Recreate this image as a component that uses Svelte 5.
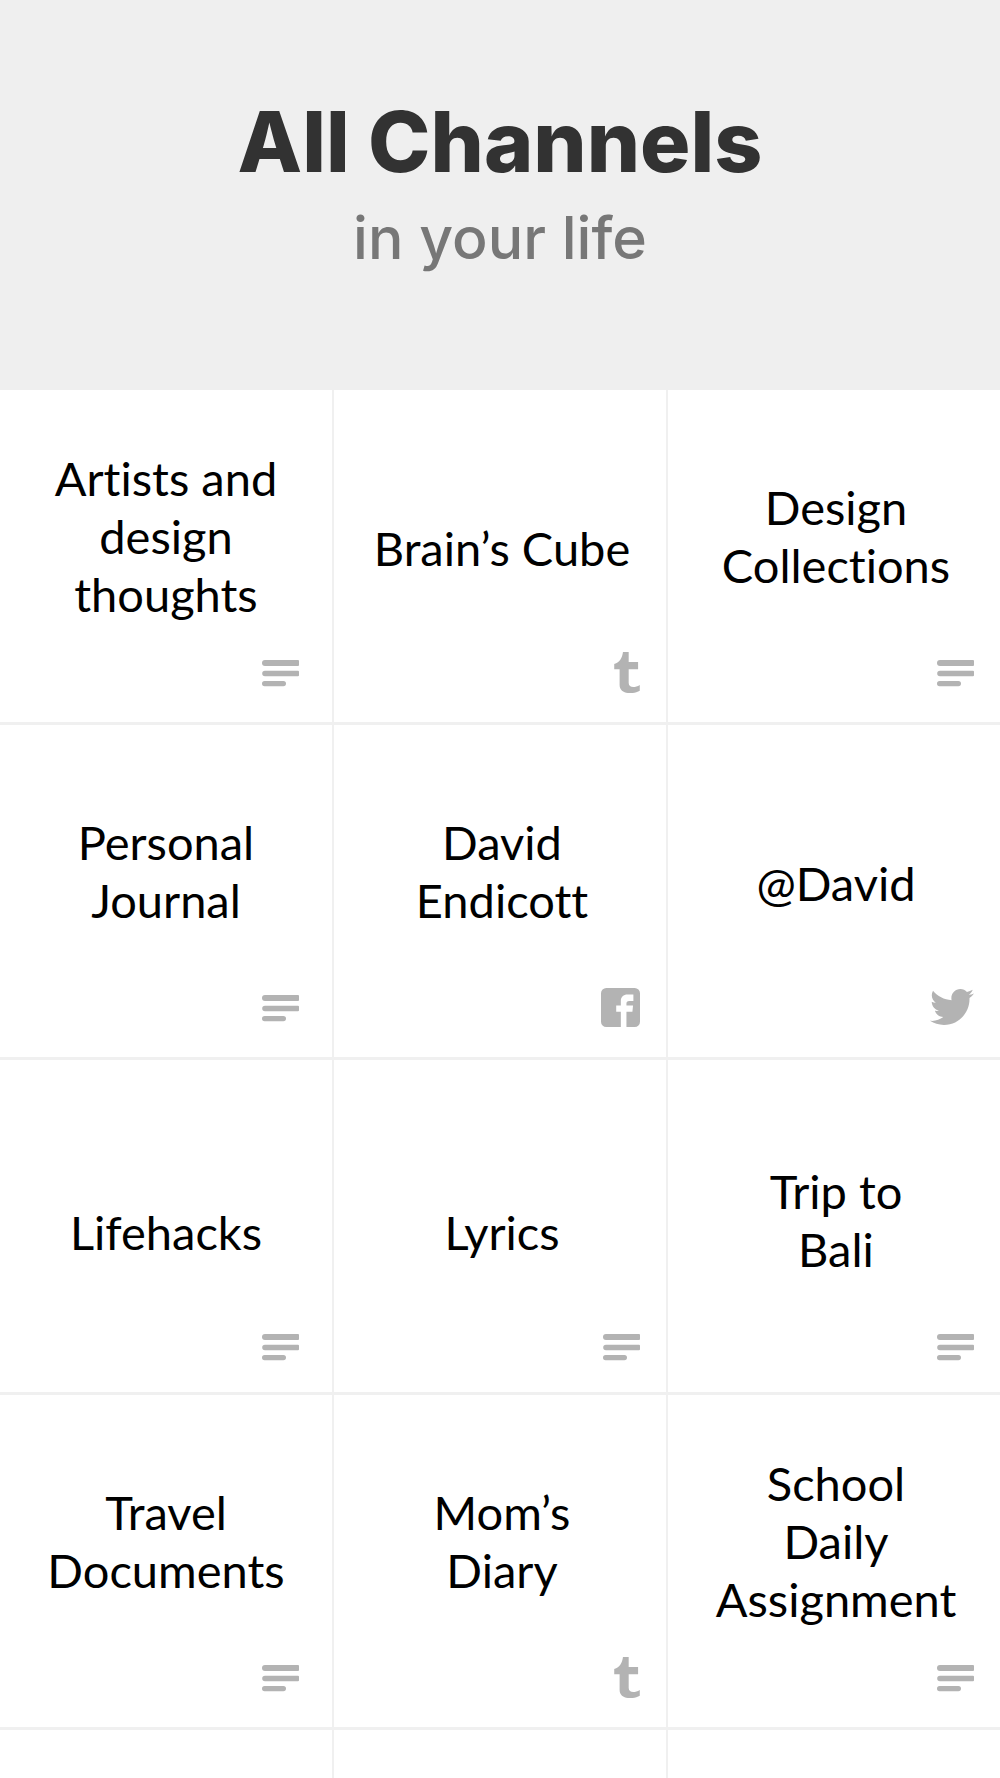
<script lang="ts">
	type Icon = 'note' | 'tumblr' | 'facebook' | 'twitter';

	interface Channel {
		title: string;
		icon: Icon;
		low?: boolean;
	}

	const channels: Channel[] = [
		{ title: 'Artists and\ndesign\nthoughts', icon: 'note' },
		{ title: 'Brain’s Cube', icon: 'tumblr' },
		{ title: 'Design\nCollections', icon: 'note' },
		{ title: 'Personal\nJournal', icon: 'note' },
		{ title: 'David\nEndicott', icon: 'facebook' },
		{ title: '@David', icon: 'twitter' },
		{ title: 'Lifehacks', icon: 'note', low: true },
		{ title: 'Lyrics', icon: 'note', low: true },
		{ title: 'Trip to\nBali', icon: 'note', low: true },
		{ title: 'Travel\nDocuments', icon: 'note' },
		{ title: 'Mom’s\nDiary', icon: 'tumblr' },
		{ title: 'School\nDaily\nAssignment', icon: 'note' }
	];

	// Blank tiles that close the grid
	const blanks = [0, 1, 2];
</script>

<main class="page">
	<header class="header">
		<h1>All Channels</h1>
		<p>in your life</p>
	</header>

	<nav class="grid" aria-label="Channels">
		{#each channels as channel}
			<a
				class="tile"
				class:single={!channel.title.includes('\n')}
				class:low={channel.low}
				href="#channel"
			>
				<span class="title">{channel.title}</span>
				<span class="icon">
					{#if channel.icon === 'note'}
						<svg class="note" width="37" height="27" viewBox="0 0 37 27" aria-hidden="true">
							<path d="M3 0h33q1 0 1 1v4q0 1-1 1H3a3 3 0 0 1 0-6z" />
							<path d="M3 10.7h33q1 0 1 1v3.6q0 1-1 1H3a2.8 2.8 0 0 1 0-5.6z" />
							<rect y="21" width="24" height="5.2" rx="2.6" />
						</svg>
					{:else if channel.icon === 'tumblr'}
						<svg width="26" height="41" viewBox="0 0 76 122" aria-hidden="true">
							<path d="M26 0h17v30h28v21H43v41c0 14 17 16 33 6v17c-22 13-60 10-60-17V51H0V36C17 30 24 17 26 0z" />
						</svg>
					{:else if channel.icon === 'facebook'}
						<svg width="39" height="39" viewBox="0 0 118 118" aria-hidden="true">
							<path d="M16 0h86a16 16 0 0 1 16 16v86a16 16 0 0 1-16 16H77V72h18l2-19H77v-6c0-5 2-8 9-8h12V20H80c-12 0-20 7-20 20v13H46v19h14v46H16a16 16 0 0 1-16-16V16A16 16 0 0 1 16 0z" />
						</svg>
					{:else}
						<svg width="44" height="38" viewBox="0 2 24 20" aria-hidden="true">
							<path d="M23.954 4.569c-.885.389-1.83.654-2.825.775 1.014-.611 1.794-1.574 2.163-2.723-.951.555-2.005.959-3.127 1.184-.896-.959-2.173-1.559-3.591-1.559-2.717 0-4.92 2.203-4.92 4.917 0 .39.045.765.127 1.124C7.691 8.094 4.066 6.13 1.64 3.161c-.427.722-.666 1.561-.666 2.475 0 1.71.87 3.213 2.188 4.096-.807-.026-1.566-.248-2.228-.616v.061c0 2.385 1.693 4.374 3.946 4.827-.413.111-.849.171-1.296.171-.314 0-.615-.03-.916-.086.631 1.953 2.445 3.377 4.604 3.417-1.68 1.319-3.809 2.105-6.102 2.105-.39 0-.779-.023-1.17-.067 2.189 1.394 4.768 2.209 7.557 2.209 9.054 0 13.999-7.496 13.999-13.986 0-.209 0-.42-.015-.63.961-.689 1.8-1.56 2.46-2.548l-.047-.02z" />
						</svg>
					{/if}
				</span>
			</a>
		{/each}
		{#each blanks as _}
			<div class="blank"></div>
		{/each}
	</nav>
</main>

<style>
	:global(body) {
		margin: 0;
		background: #efefef;
	}

	.page {
		display: flex;
		flex-direction: column;
		min-height: 100vh;
		font-family: Lato, 'Open Sans', sans-serif;
		font-variant-ligatures: none;
		color: #000;
	}

	.header {
		box-sizing: border-box;
		min-height: 390px;
		padding-top: 92px;
		font-family: Inter, 'Open Sans', sans-serif;
		text-align: center;
	}

	h1,
	p {
		margin: 0;
	}

	h1 {
		font-size: 84px;
		line-height: 100px;
		font-weight: 800;
		color: #323232;
	}

	p {
		font-size: 59px;
		line-height: 92px;
		font-weight: 500;
		color: #777;
	}

	.grid {
		flex: 1;
		display: grid;
		grid-template-columns: repeat(3, 1fr);
		grid-template-rows: repeat(4, auto) 1fr;
		gap: 3px 2px;
		background: #f0f0f0;
	}

	.tile {
		box-sizing: border-box;
		min-height: 332px;
		padding-bottom: 30px;
		display: flex;
		flex-direction: column;
		background: #fff;
		color: inherit;
		text-decoration: none;
	}

	.title {
		flex: 1;
		display: flex;
		align-items: center;
		justify-content: center;
		padding: 30px 0 0 4px;
		font-size: 47px;
		line-height: 58px;
		text-align: center;
		white-space: pre-line;
	}

	.single .title {
		padding-top: 54px;
	}

	.low .title {
		padding-top: 58px;
	}

	.single.low .title {
		padding-top: 82px;
	}

	.icon {
		display: flex;
		align-items: center;
		justify-content: flex-end;
		height: 40px;
		padding-right: 26px;
	}

	/* first column keeps its icons a little further in */
	.tile:nth-child(3n + 1) .title {
		padding-left: 0;
	}

	.tile:nth-child(3n + 1) .icon {
		padding-right: 33px;
	}

	.icon svg {
		display: block;
		fill: #b3b3b3;
	}

	.icon .note {
		margin-top: 2px;
	}

	.low .note {
		margin-top: 10px;
	}

	.blank {
		background: #fff;
	}
</style>
